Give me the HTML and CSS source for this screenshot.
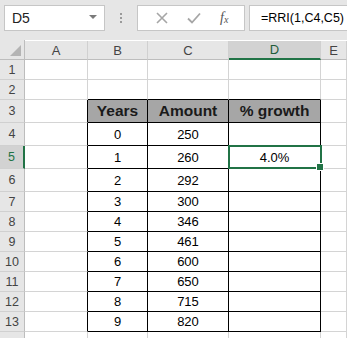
FILE: index.html
```html
<!DOCTYPE html>
<html>
<head lang="en">
  <meta charset="UTF-8">
  <title>RRI</title>
  <link rel="stylesheet" href="styles.css">
</head>
<body>
<div class="formula-bar">
  <div class="name-box">
    <span class="name-text">D5</span>
    <span class="name-caret"></span>
  </div>
  <div class="grip"><i></i><i></i><i></i></div>
  <div class="fx-buttons">
    <svg class="fx-icon" width="12" height="12" viewBox="0 0 12 12"><path d="M1 1 L11 11 M11 1 L1 11" stroke="#a6a6a6" stroke-width="1.6" fill="none"/></svg>
    <svg class="fx-icon" width="14" height="12" viewBox="0 0 14 12"><path d="M1 6.5 L5 10.5 L13 1.5" stroke="#a6a6a6" stroke-width="1.8" fill="none"/></svg>
    <span class="fx-text">f<sub>x</sub></span>
  </div>
  <div class="formula-input">=RRI(1,C4,C5)</div>
</div>

<div class="sheet">
  <!-- column headers -->
  <div class="corner"><span class="corner-tri"></span></div>
  <div class="ch">A</div>
  <div class="ch">B</div>
  <div class="ch">C</div>
  <div class="ch ch-active">D</div>
  <div class="ch">E</div>

  <!-- row 1 -->
  <div class="rh">1</div>
  <div class="c"></div><div class="c"></div><div class="c"></div><div class="c"></div><div class="c"></div>
  <!-- row 2 -->
  <div class="rh">2</div>
  <div class="c"></div><div class="c tt"></div><div class="c tt"></div><div class="c tt"></div><div class="c"></div>
  <!-- row 3 header -->
  <div class="rh">3</div>
  <div class="c tl"></div><div class="c t th">Years</div><div class="c t th">Amount</div><div class="c t th">% growth</div><div class="c"></div>
  <!-- rows 4..13 -->
  <div class="rh">4</div>
  <div class="c tl"></div><div class="c t">0</div><div class="c t">250</div><div class="c t"></div><div class="c"></div>
  <div class="rh rh-active">5</div>
  <div class="c tl"></div><div class="c t">1</div><div class="c t">260</div><div class="c t sel">4.0%</div><div class="c"></div>
  <div class="rh">6</div>
  <div class="c tl"></div><div class="c t">2</div><div class="c t">292</div><div class="c t"></div><div class="c"></div>
  <div class="rh">7</div>
  <div class="c tl"></div><div class="c t">3</div><div class="c t">300</div><div class="c t"></div><div class="c"></div>
  <div class="rh">8</div>
  <div class="c tl"></div><div class="c t">4</div><div class="c t">346</div><div class="c t"></div><div class="c"></div>
  <div class="rh">9</div>
  <div class="c tl"></div><div class="c t">5</div><div class="c t">461</div><div class="c t"></div><div class="c"></div>
  <div class="rh">10</div>
  <div class="c tl"></div><div class="c t">6</div><div class="c t">600</div><div class="c t"></div><div class="c"></div>
  <div class="rh">11</div>
  <div class="c tl"></div><div class="c t">7</div><div class="c t">650</div><div class="c t"></div><div class="c"></div>
  <div class="rh">12</div>
  <div class="c tl"></div><div class="c t">8</div><div class="c t">715</div><div class="c t"></div><div class="c"></div>
  <div class="rh">13</div>
  <div class="c tl"></div><div class="c t">9</div><div class="c t">820</div><div class="c t"></div><div class="c"></div>
  <!-- row 14 (cut off) -->
  <div class="rh"></div>
  <div class="c"></div><div class="c"></div><div class="c"></div><div class="c"></div><div class="c"></div>
</div>
</body>
</html>
```

FILE: styles.css
```css
* {
  box-sizing: border-box;
}

body {
  margin: 0;
  width: 347px;
  height: 338px;
  overflow: hidden;
  background: #ffffff;
  font-family: "Liberation Sans", Arial, sans-serif;
  color: #000000;
}

/* ---- formula bar ---- */
.formula-bar {
  height: 40px;
  background: #e6e6e6;
  display: flex;
  align-items: flex-start;
  padding: 5px 0 0 4px;
}

.name-box {
  width: 101px;
  height: 26px;
  background: #ffffff;
  border: 1px solid #c6c6c6;
  display: flex;
  align-items: center;
  justify-content: space-between;
  padding: 0 7px 0 7px;
}

.name-text {
  font-size: 14px;
  color: #222222;
}

.name-caret {
  width: 0;
  height: 0;
  border-left: 4px solid transparent;
  border-right: 4px solid transparent;
  border-top: 4px solid #7a7a7a;
  margin-bottom: 3px;
}

.grip {
  width: 32px;
  height: 26px;
  display: flex;
  flex-direction: column;
  align-items: center;
  justify-content: center;
  gap: 2px;
}

.grip i {
  width: 2px;
  height: 2px;
  background: #9a9a9a;
}

.fx-buttons {
  width: 108px;
  height: 26px;
  background: #ffffff;
  border: 1px solid #c6c6c6;
  display: flex;
  align-items: center;
  justify-content: space-around;
  padding: 0 6px 0 8px;
}

.fx-text {
  font-family: "Liberation Serif", "Times New Roman", serif;
  font-style: italic;
  font-size: 14px;
  color: #555555;
}

.fx-text sub {
  font-size: 10px;
  vertical-align: -1px;
}

.formula-input {
  flex: 1;
  height: 26px;
  margin-left: 4px;
  background: #ffffff;
  border: 1px solid #c6c6c6;
  border-right: none;
  font-size: 12.5px;
  line-height: 24px;
  padding-left: 11px;
  white-space: nowrap;
}

/* ---- sheet grid ---- */
.sheet {
  display: grid;
  grid-template-columns: 25px 63px 60px 81px 92px 26px;
  grid-template-rows: 20px 20px 20px 23px 23px 23px 23px 20px 20px 20px 20px 20px 20px 20px 20px;
}

.corner,
.ch,
.rh {
  background: #e6e6e6;
  color: #444444;
  display: flex;
  align-items: center;
  justify-content: center;
}

.corner {
  border-right: 1px solid #bdbdbd;
  border-bottom: 1px solid #bdbdbd;
  position: relative;
}

.corner-tri {
  position: absolute;
  right: 3px;
  bottom: 3px;
  width: 0;
  height: 0;
  border-left: 11px solid transparent;
  border-bottom: 11px solid #b4b4b4;
}

.ch {
  font-size: 13px;
  border-right: 1px solid #d0d0d0;
  border-bottom: 1px solid #bdbdbd;
  margin-top: 1px;
}

.ch-active {
  background: #d2d2d2;
  color: #1f5c3a;
  border-bottom: 2px solid #217346;
}

.rh {
  font-size: 12.5px;
  border-right: 1px solid #bdbdbd;
  border-bottom: 1px solid #d0d0d0;
}

.rh-active {
  background: #d2d2d2;
  color: #217346;
  border-right: 2px solid #217346;
}

.c {
  border-right: 1px solid #d4d4d4;
  border-bottom: 1px solid #d4d4d4;
  display: flex;
  align-items: center;
  justify-content: center;
  font-size: 13px;
}

.tl {
  border-right-color: #000000;
}

.tt {
  border-bottom-color: #000000;
}

.t {
  border-right-color: #000000;
  border-bottom-color: #000000;
}

.th {
  background: #a6a6a6;
  font-weight: bold;
  font-size: 15.5px;
  color: #1a1a1a;
}

.sel {
  position: relative;
}

.sel::after {
  content: "";
  position: absolute;
  left: -1px;
  top: -1px;
  right: -2px;
  bottom: -1px;
  border: 2px solid #217346;
}

.sel::before {
  content: "";
  position: absolute;
  right: -4px;
  bottom: -3px;
  width: 6px;
  height: 6px;
  background: #217346;
  border: 1px solid #ffffff;
  z-index: 2;
}
```
